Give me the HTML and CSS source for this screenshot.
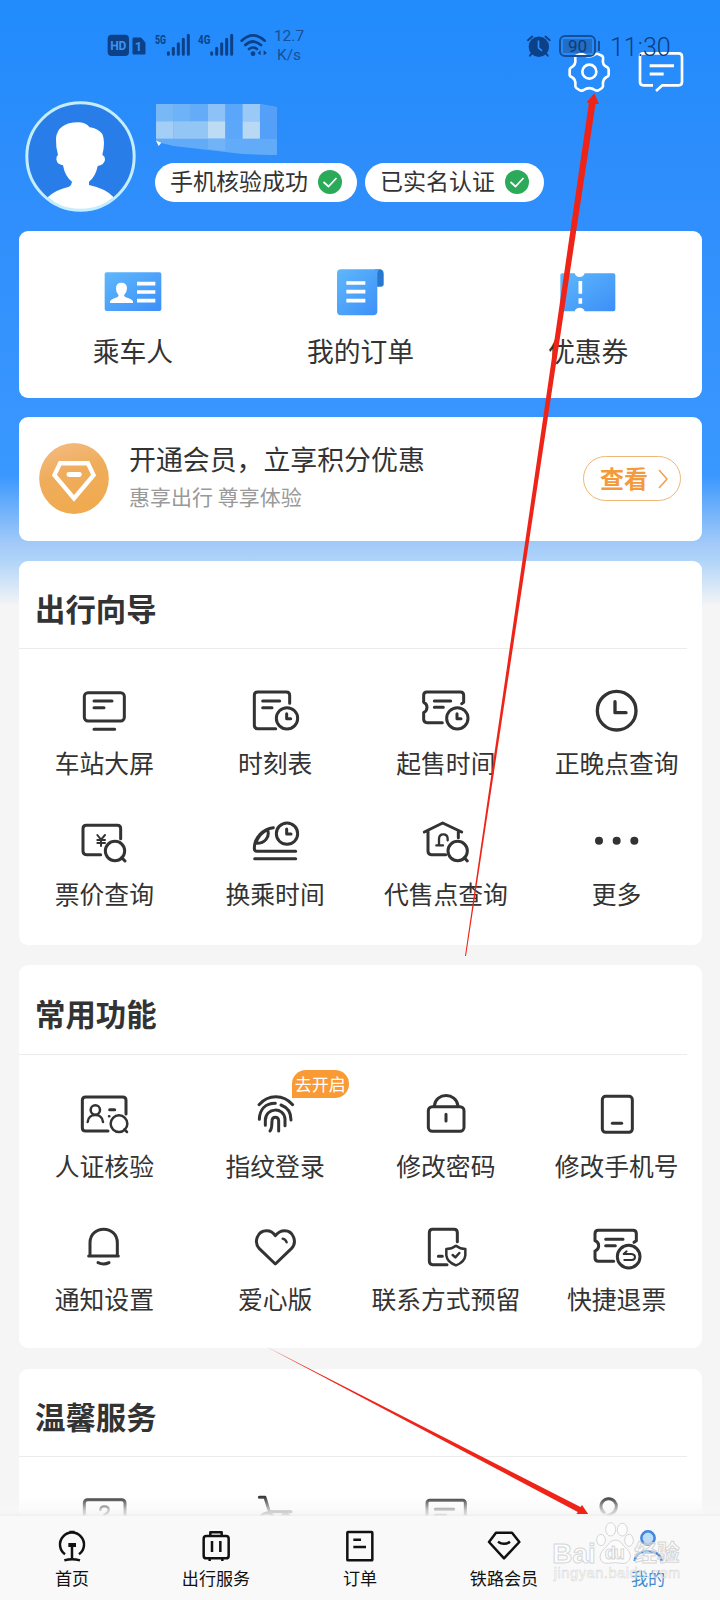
FILE: index.html
```html
<!DOCTYPE html>
<html lang="zh-CN">
<head>
<meta charset="utf-8">
<title>我的</title>
<link rel="stylesheet" href="styles.css">
</head>
<body>
<div class="screen">
  <div class="status">
    <svg class="signals" viewBox="315 90 495 90">
      <rect x="323" y="104" width="64" height="64" rx="12" fill="#0c4187"/>
      <text x="355" y="151" class="st-hd" text-anchor="middle" textLength="48">HD</text>
      <path d="M399 114h24l12 14v34h-36z" fill="#0c4187" stroke="#0c4187" stroke-width="3" stroke-linejoin="round"/>
      <text x="415" y="153" class="st-sim" text-anchor="middle">1</text>
      <text x="465" y="131" class="st-gen" textLength="33" lengthAdjust="spacingAndGlyphs">5G</text>
      <path d="M505 158v5M520 145v18M535 131v32M550 118v45M565 106v57" class="st-bar"/>
      <text x="594" y="131" class="st-gen" textLength="37" lengthAdjust="spacingAndGlyphs">4G</text>
      <path d="M635 158v5M650 145v18M665 131v32M680 118v45M695 106v57" class="st-bar"/>
      <path d="M725 122Q759 90 794 122M736 135Q759 114 783 135M747 147Q759 138 771 147" fill="none" stroke="#0c4187" stroke-width="8" stroke-linecap="round"/>
      <circle cx="759" cy="161" r="7" fill="#0c4187"/>
      <path d="M773 159l9-8v15zM801 159l-10-8v15z" fill="#0c4187"/>
    </svg>
    <div class="speed"><span>12.7</span><span>K/s</span></div>
    <svg class="alarm" viewBox="495 95 85 80">
      <circle cx="537" cy="139" r="31" fill="#0c4187"/>
      <path d="M504 119l13-11M570 119l-13-11M515 160l-5 6M559 160l5 6" stroke="#0c4187" stroke-width="6" stroke-linecap="round"/>
      <path d="M536 120v22l11 9" stroke="#2d8dfb" stroke-width="5" fill="none"/>
    </svg>
    <div class="battery"><span>90</span></div>
    <span class="clock">11:30</span>
  </div>

  <header class="head">
    <div class="tools">
      <svg class="tool" viewBox="612 142 150 150" fill="none" stroke="#fff" stroke-width="8" stroke-linejoin="round">
        <path d="M658 164Q665 160 670 165Q687 176 704 165Q710 160 717 164L727 169Q731 173 729 180Q726 196 742 203Q746 206 746 210V225Q746 230 740 232Q727 239 729 256Q730 262 726 265L717 271Q711 275 705 271Q688 260 671 271Q664 275 658 271L649 265Q645 262 646 256Q648 239 635 232Q629 230 629 225V210Q629 206 634 203Q648 196 646 180Q644 173 648 169Z"/>
        <circle cx="688" cy="216" r="21"/>
      </svg>
      <svg class="tool" viewBox="829 142 150 150" fill="none" stroke="#fff" stroke-width="8" stroke-linejoin="round">
        <path d="M880 257H851Q841 257 841 247V171Q841 161 851 161H957Q967 161 967 171V247Q967 257 957 257H908L889 274"/>
        <path d="M870 198H943M870 223H912" stroke-width="9"/>
      </svg>
    </div>
    <div class="profile">
      <svg class="avatar" viewBox="76 303 333 333">
        <circle cx="242.500" cy="469.500" r="160" fill="#297de8"/>
        <path d="M144 592Q165 570 208 560Q216 556 217 545Q196 530 190 496Q172 494 170 478Q170 468 175 465Q168 440 169 415Q174 368 235 367Q258 367 270 382Q295 385 308 402Q318 425 308 465Q316 468 316 480Q312 496 294 498Q288 530 268 545V555Q320 566 342 592Q298 632 242 630Q185 630 144 592Z" fill="#fff"/>
        <circle cx="242.500" cy="469.500" r="161" fill="none" stroke="#c4eeff" stroke-width="9"/>
      </svg>
      <div class="who">
        <svg class="mosaic" viewBox="468 312 363 154">
          <path d="M468 312H780L831 321V466L728 462L624 450L520 438L468 425Z" fill="#62abf8"/>
          <path d="M468 312h52v52h-52z" fill="#79b8f7"/><path d="M520 312h52v52h-52z" fill="#6eb2f8"/><path d="M572 312h52v52h-52z" fill="#64acf8"/>
          <path d="M624 312h52v52h-52z" fill="#8cc2f7"/><path d="M676 312h52v52h-52z" fill="#5aa6fa"/><path d="M728 312h52v52h-52z" fill="#98c9f7"/>
          <path d="M468 364h52v52h-52z" fill="#a3cef5"/><path d="M520 364h104v52H520z" fill="#93c5f5"/>
          <path d="M624 364h52v52h-52z" fill="#bddcf4"/><path d="M676 364h52v52h-52z" fill="#5ca7fa"/><path d="M728 364h52v52h-52z" fill="#b8d8f4"/>
          <path d="M780 314l51 8v95h-51z" fill="#549ff8"/><path d="M624 416h52v36l-52-5z" fill="#71b3f7"/>
          <path d="M468 422l16 6-8 10z" fill="#fff"/>
        </svg>
        <div class="pills">
          <div class="pill"><span>手机核验成功</span><svg viewBox="0 0 24 24"><circle cx="12" cy="12" r="12" fill="#2baa5a"/><path d="M5.500 12l5 4.500 8-8.500" fill="none" stroke="#fff" stroke-width="1.700"/></svg></div>
          <div class="pill"><span>已实名认证</span><svg viewBox="0 0 24 24"><circle cx="12" cy="12" r="12" fill="#2baa5a"/><path d="M5.500 12l5 4.500 8-8.500" fill="none" stroke="#fff" stroke-width="1.700"/></svg></div>
        </div>
      </div>
    </div>
  </header>

  <main class="cards">
    <svg class="defs" width="0" height="0"><defs>
      <linearGradient id="blue" x1="0" y1="0" x2="1" y2="1"><stop offset="0" stop-color="#5fb7fb"/><stop offset="1" stop-color="#3c8ff8"/></linearGradient>
      <linearGradient id="gold" x1="0" y1="0" x2=".3" y2="1"><stop offset="0" stop-color="#f4bd85"/><stop offset=".5" stop-color="#efad5c"/><stop offset="1" stop-color="#f0aa50"/></linearGradient>
    </defs></svg>
    <section class="card quick">
      <a class="q"><svg viewBox="293 131 210 168"><rect x="313" y="156" width="170" height="116" rx="6" fill="url(#blue)"/><path d="M329 248v-5Q334 235 352 230L355 225Q346 215 347 204Q347 187 363 187Q380 187 380 204Q380 216 371 225L374 230Q394 235 398 243V248Z" fill="#fff"/><path d="M410 190H465M410 215H465M410 241H465" stroke="#fff" stroke-width="11"/></svg><span>乘车人</span></a>
      <a class="q"><svg viewBox="976 131 210 168"><path d="M1126 147H1142Q1152 149 1152 160V192Q1152 199 1145 199H1130Z" fill="#2878d0"/><path d="M1024 147H1140Q1133 150 1133 163V273Q1133 285 1120 285H1024Q1012 285 1012 273V159Q1012 147 1024 147Z" fill="url(#blue)"/><path d="M1040 188H1097M1040 214H1097M1040 241H1097" stroke="#fff" stroke-width="11"/></svg><span>我的订单</span></a>
      <a class="q"><svg viewBox="580 131 210 168"><path d="M607 159H645Q648 170 660 170Q672 170 675 159H761Q767 159 767 165V267Q767 273 761 273H675Q672 262 660 262Q648 262 645 273H607Q602 273 602 267V165Q602 159 607 159Z" fill="url(#blue)"/><path d="M662 182V220M662 234V250" stroke="#fff" stroke-width="11"/></svg><span>优惠券</span></a>
    </section>

    <section class="card member">
      <svg class="badge" viewBox="117 671 210 214"><ellipse cx="222" cy="778" rx="105" ry="107" fill="url(#gold)"/><path d="M180 732H264L281 768L222 838L163 768Z" fill="none" stroke="#fff" stroke-width="13"/><path d="M207 766H238" stroke="#fff" stroke-width="15" stroke-linecap="round"/></svg>
      <div class="pitch"><span class="pitch-t">开通会员，立享积分优惠</span><span class="pitch-s">惠享出行 尊享体验</span></div>
      <a class="see"><span>查看</span><svg viewBox="0 0 10 20"><path d="M1 1l8 9-8 9" fill="none" stroke="#f0a04b" stroke-width="1.500"/></svg></a>
    </section>

    <section class="card group guide">
      <h2>出行向导</h2>
      <div class="grid">
        <a class="it"><svg viewBox="238 407 150 150"><rect x="254" y="427" width="120" height="85" rx="11"/><path d="M283 452H337M283 472H313M283 537H345"/></svg><span>车站大屏</span></a>
        <a class="it"><svg viewBox="750 407 150 150"><path d="M869 459V435Q869 425 859 425H773Q763 425 763 435V525Q763 535 773 535H827M788 452H839M788 472H816M860 490V505H872"/><circle cx="861" cy="504" r="32"/></svg><span>时刻表</span></a>
        <a class="it"><svg viewBox="182 407 150 150"><path d="M246 517H200Q190 517 190 507V487Q200 482 200 471Q200 460 190 456V435Q190 425 200 425H300Q310 425 310 435V456L304 460M222 452H271M222 471H249M290 490V505H302"/><circle cx="291" cy="504" r="32"/></svg><span>起售时间</span></a>
        <a class="it"><svg viewBox="695 407 150 150"><g stroke-width="10"><circle cx="769" cy="481" r="58"/><path d="M764 454V487H797"/></g></svg><span>正晚点查询</span></a>
        <a class="it"><svg viewBox="238 800 150 150"><path d="M363 865V835Q363 825 353 825H260Q250 825 250 835V903Q250 913 260 913H303M366 922L376 932"/><path d="M293 854L304 868L316 854M304 868V887M293 869H316M293 878H316" stroke-width="6"/><circle cx="346" cy="902" r="29"/></svg><span>票价查询</span></a>
        <a class="it"><svg viewBox="750 800 150 150"><path d="M820 832C790 836 763 860 763 894Q763 903 771 903H887M764 925H887M803 838C810 860 795 880 768 879C773 860 787 845 803 838"/><path d="M860 836V851H873"/><circle cx="861" cy="850" r="32"/></svg><span>换乘时间</span></a>
        <a class="it"><svg viewBox="182 800 150 150"><path d="M192 845L247 818L304 845M203 843V903Q203 913 213 913H256M294 845V862M312 922L321 932"/><path d="M236 884V866Q236 852 249 852Q262 852 262 866V870M228 885H248" stroke-width="7"/><circle cx="292" cy="902" r="29"/></svg><span>代售点查询</span></a>
        <a class="it"><svg viewBox="695 800 150 150"><path class="solid" d="M704 871a12 12 0 1 0 24 0a12 12 0 1 0-24 0M757 871a12 12 0 1 0 24 0a12 12 0 1 0-24 0M810 871a12 12 0 1 0 24 0a12 12 0 1 0-24 0"/></svg><span>更多</span></a>
      </div>
    </section>

    <section class="card group common">
      <h2>常用功能</h2>
      <div class="grid">
        <a class="it"><svg viewBox="238 415 150 150"><path d="M379 490V449Q379 439 369 439H258Q248 439 248 449V531Q248 541 258 541H325M330 477H345"/><g stroke-width="7.500"><circle cx="287" cy="478" r="14"/><path d="M264 514C266 486 308 486 310 514M328 497h1M374 536L382 544"/><circle cx="358" cy="519" r="25"/></g></svg><span>人证核验</span></a>
        <a class="it"><svg viewBox="750 415 150 150"><path d="M777 462C805 430 850 430 878 462M778 506C779 478 795 458 826 458M843 463C862 470 873 486 873 508M796 524V508C797 470 852 468 855 505V525M810 541C817 533 815 520 816 510C817 496 835 496 836 510V541"/></svg><span>指纹登录</span><em class="tag">去开启</em></a>
        <a class="it"><svg viewBox="182 415 150 150"><rect x="204" y="468" width="107" height="74" rx="12"/><path d="M222 466C226 424 288 424 293 466M257 491V511"/></svg><span>修改密码</span></a>
        <a class="it"><svg viewBox="695 415 150 150"><rect x="726" y="437" width="90" height="108" rx="10"/><path d="M756 518H784"/></svg><span>修改手机号</span></a>
        <a class="it"><svg viewBox="238 812 150 150"><path d="M271 913V875C271 820 353 820 353 875V913M267 914H356M295 934Q312 942 328 934"/></svg><span>通知设置</span></a>
        <a class="it"><svg viewBox="750 812 150 150"><path d="M826 938L778 892C760 872 772 838 800 838C813 838 821 845 826 853C832 845 840 838 854 838C880 838 893 872 874 892Z"/><path d="M848 862Q857 864 860 873" stroke-width="7"/></svg><span>爱心版</span></a>
        <a class="it"><svg viewBox="182 812 150 150"><path d="M291 871V844Q291 834 281 834H217Q207 834 207 844V930Q207 940 217 940H260M234 915H246"/><g stroke-width="7.500"><path d="M287 883Q300 893 315 893V912Q313 932 287 942Q260 932 258 912V893Q274 893 287 883Z"/><path d="M277 911L285 918L297 905"/></g></svg><span>联系方式预留</span></a>
        <a class="it"><svg viewBox="695 812 150 150"><path d="M760 930H714Q704 930 704 920V899Q715 894 715 883Q715 872 704 868V847Q704 837 714 837H818Q828 837 828 847V868L821 873M736 864H788M736 883H765"/><circle cx="805" cy="916" r="34"/><path d="M799 900L790 908H814Q824 909 824 917Q824 926 814 926H792" stroke-width="6"/></svg><span>快捷退票</span></a>
      </div>
    </section>

    <section class="card group warm">
      <h2>温馨服务</h2>
      <div class="grid">
        <a class="it"><svg viewBox="238 452 150 150"><rect x="254" y="481" width="122" height="90" rx="10"/><path d="M302 512Q302 501 314 501Q327 501 327 511Q327 520 314 526V534" stroke-width="7"/></svg></a>
        <a class="it"><svg viewBox="750 452 150 150"><path d="M778 474H795L808 517H873M784 530Q800 512 820 530M846 530Q856 518 868 530"/></svg></a>
        <a class="it"><svg viewBox="182 452 150 150"><rect x="200" y="483" width="115" height="88" rx="8"/><path d="M225 510H280M225 528H256"/></svg></a>
        <a class="it"><svg viewBox="695 452 150 150"><path d="M732 520A23 23 0 1 1 758 520Q750 526 740 530"/></svg></a>
      </div>
    </section>
  </main>

  <nav class="tabs">
    <a class="tab"><svg viewBox="155 557 120 120"><path d="M194 642A36 36 0 1 1 236 642M207 575H223M192 660Q215 653 239 660"/><path d="M215 612V655" /><path d="M204 614H227" stroke-width="12"/></svg><span>首页</span></a>
    <a class="tab"><svg viewBox="587 557 120 120"><rect x="610" y="587" width="75" height="67" rx="8"/><path d="M630 585V576H664V585M635 602V635M660 602V635M628 656V662M666 656V662"/></svg><span>出行服务</span></a>
    <a class="tab"><svg viewBox="-60 557 120 120"><rect x="-38" y="575" width="75" height="85" rx="2"/><path d="M-20 598H3M-20 620H18"/></svg><span>订单</span></a>
    <a class="tab"><svg viewBox="371 557 120 120"><path d="M407 577H455L477 605L431 654L386 605Z"/><path d="M413 604Q431 617 449 604"/></svg><span>铁路会员</span></a>
    <a class="tab on"><svg viewBox="803 557 120 120"><circle cx="863" cy="593" r="20" fill="#bcdcf9"/><path d="M823 662C827 622 899 622 904 662"/></svg><span>我的</span></a>
  </nav>

  <svg class="watermark" viewBox="575 540 390 190">
    <g class="wm">
      <text x="576" y="668" font-size="84" textLength="130">Bai</text>
      <ellipse cx="722" cy="600" rx="13" ry="17"/><ellipse cx="751" cy="568" rx="15" ry="20"/><ellipse cx="786" cy="569" rx="15" ry="19"/><ellipse cx="806" cy="601" rx="13" ry="18"/>
      <path d="M763 600Q780 600 790 618Q812 634 810 652Q804 674 782 670Q763 666 745 670Q722 672 719 652Q720 634 740 618Q750 600 763 600Z"/>
      <text x="733" y="658" font-size="54" textLength="60">du</text>
      <text x="822" y="664" font-size="68" textLength="136" class="cjk">经验</text>
      <text x="580" y="714" font-size="44" textLength="380" class="thin">jingyan.baidu.com</text>
    </g>
  </svg>
  <svg class="arrows" viewBox="0 0 720 1600" fill="#ef2418">
    <path d="M465 956L588.900 103L586.500 102.500L594.300 93.300L599 104L595.500 104L466 956Z"/>
    <path d="M265 1346L580.500 1507L582 1505L588.200 1514L576.500 1514L577.800 1512Z"/>
  </svg>
</div>
</body>
</html>
```

FILE: styles.css
```css
* { box-sizing: border-box; }

body {
  margin: 0;
  font-family: "Noto Sans CJK SC", "Noto Sans", sans-serif;
  color: #333;
}

.screen {
  position: relative;
  width: 720px;
  height: 1600px;
  overflow: hidden;
  display: flex;
  flex-direction: column;
  background: #f5f5f5 linear-gradient(#218bfd 0, #2d8dfb 160px, #3895ff 400px, #3997ff 475px, #6db0fb 508px, #a4cbf8 545px, #acd2f9 558px, #f5f5f5 606px);
}

/* Status bar, drawn above the page header */
.status {
  position: absolute;
  z-index: 2;
  left: 105px;
  top: 26px;
  width: 580px;
  height: 40px;
  display: flex;
  align-items: center;
  color: #184f96;
  font-family: Roboto, sans-serif;
}
.signals { width: 165px; height: 30px; margin-top: -2px; }
.st-hd { font: 700 36px Roboto, sans-serif; fill: #3d93f5; }
.st-sim { font: 700 38px Roboto, sans-serif; fill: #3d93f5; }
.st-gen { font: 700 38px Roboto, sans-serif; fill: #0c4187; }
.st-bar { fill: none; stroke: #0c4187; stroke-width: 9; stroke-linecap: round; }
.speed {
  display: flex;
  flex-direction: column;
  width: 40px;
  margin-left: -1px;
  text-align: center;
  font-size: 15.500px;
  line-height: 19px;
}
.alarm { width: 28px; height: 27px; margin-left: 216px; margin-top: -2px; }
.battery {
  position: relative;
  width: 37px;
  height: 22px;
  margin-left: 6px;
  margin-top: -1px;
  padding: 2px;
  border: 2px solid #164f97;
  border-radius: 6px;
}
.battery::after {
  content: "";
  position: absolute;
  right: -6px;
  top: 4px;
  width: 2.500px;
  height: 10px;
  background: #164f97;
}
.battery span {
  display: block;
  height: 14px;
  font-size: 17px;
  line-height: 15px;
  text-align: center;
  background: #236dc4;
  color: #0c3c7d;
}
.clock { margin-left: 14px; padding-top: 2px; font-size: 25px; font-weight: 300; color: #0d3d7e; }

/* Header */
.head { flex: none; height: 231px; }
.tools {
  display: flex;
  justify-content: flex-end;
  gap: 22.300px;
  height: 101px;
  padding: 47.300px 33.700px 0 0;
}
.tool { width: 50px; height: 50px; }
.profile { display: flex; padding-left: 25px; gap: 19px; }
.avatar { width: 111px; height: 111px; }
.who { padding-top: 3px; }
.mosaic { display: block; width: 121px; height: 51.300px; margin-left: 1px; }
.pills { display: flex; gap: 8px; margin-top: 7.700px; }
.pill {
  display: flex;
  align-items: center;
  height: 39.300px;
  padding: 0 15px 0 15px;
  gap: 10px;
  border-radius: 20px;
  background: #fff;
  font-size: 23px;
  line-height: 36px;
}
.pill span { margin-top: -6px; }
.pill svg { width: 24px; height: 24px; margin-top: -1px; }

/* Cards */
.cards { flex: none; display: flex; flex-direction: column; padding: 0 18px 0 19px; }
.defs { position: absolute; }
.card { flex: none; background: #fff; border-radius: 9px; }

.quick {
  display: grid;
  grid-template-columns: repeat(3, 1fr);
  height: 167px;
  padding-top: 32.700px;
}
.q { display: flex; flex-direction: column; align-items: center; gap: 13px; }
.q svg { width: 70px; height: 56px; }
.q span { font-size: 26.800px; line-height: 36px; }

.member {
  display: flex;
  align-items: center;
  height: 124px;
  margin-top: 18.500px;
  padding: 0 21px 0 20px;
}
.badge { width: 70px; height: 71px; }
.pitch { display: flex; flex-direction: column; flex: 1; padding: 0 0 4px 20px; }
.pitch-t { font-size: 26.900px; line-height: 38px; }
.pitch-s { font-size: 21px; line-height: 36px; color: #999; }
.see {
  display: flex;
  align-items: center;
  gap: 10px;
  width: 98px;
  height: 45px;
  padding-left: 16px;
  border: 1.500px solid #efb775;
  border-radius: 23px;
  color: #f59a3c;
  font-size: 24px;
  font-weight: 700;
}
.see span { margin-top: -3px; }
.see svg { width: 10px; height: 20px; }

.group { height: 384px; }
.guide { margin-top: 20.500px; }
.common { margin-top: 19.500px; height: 383px; }
.warm { margin-top: 21px; }
.group h2 {
  height: 88px;
  margin: 0 15px 0 0;
  padding: 25px 0 0 16px;
  border-bottom: 1.500px solid #ececec;
  font-size: 30.400px;
  line-height: 44px;
  font-weight: 700;
}
.common h2 { height: 90px; padding-top: 26.500px; }
.warm h2 { height: 88.500px; padding-top: 25.500px; }
.grid {
  display: grid;
  grid-template-columns: repeat(4, 1fr);
  row-gap: 38px;
  padding-top: 36.500px;
}
.common .grid { padding-top: 34.500px; row-gap: 39.500px; }
.warm .grid { padding-top: 33px; }
.it {
  position: relative;
  display: flex;
  flex-direction: column;
  align-items: center;
  height: 93px;
}
.it svg {
  width: 50px;
  height: 50px;
  margin-bottom: 11px;
  fill: none;
  stroke: #333;
  stroke-width: 9px;
  stroke-linecap: round;
  stroke-linejoin: round;
}
.it .solid { fill: #333; stroke: none; }
.it span { font-size: 24.800px; line-height: 30px; white-space: nowrap; }
.tag {
  position: absolute;
  left: 102px;
  top: -19px;
  width: 57px;
  height: 28px;
  border-radius: 14px 14px 14px 0;
  background: #fa9a35;
  color: #fff;
  font-size: 17px;
  font-style: normal;
  line-height: 28px;
  text-align: center;
}

/* Bottom tabs */
.tabs {
  position: absolute;
  left: 0;
  right: 0;
  bottom: 0;
  height: 84px;
  display: grid;
  grid-template-columns: repeat(5, 1fr);
  padding-top: 9.700px;
  background: #f9f9f9;
  color: #111;
}
.tabs::before {
  content: "";
  position: absolute;
  left: 0;
  right: 0;
  top: -20px;
  height: 20px;
  background: linear-gradient(rgba(250, 250, 250, 0), rgba(248, 248, 248, .75) 70%, rgba(244, 244, 244, .85) 90%, #eee);
}
.tab { display: flex; flex-direction: column; align-items: center; }
.tab svg { width: 40px; height: 40px; fill: none; stroke: #111; stroke-width: 7.500; stroke-linejoin: round; }
.tab span { font-size: 17.100px; line-height: 24px; }
.tab.on { color: #3e8bd5; }
.tab.on svg { stroke: #3f86dc; }

.watermark { position: absolute; left: 551.700px; top: 1520px; width: 130px; height: 63.300px; }
.wm { fill: rgba(255, 255, 255, .5); stroke: rgba(205, 205, 205, .8); stroke-width: 3; font-family: "Liberation Sans", sans-serif; font-weight: 700; }
.wm .cjk { font-family: "Noto Sans CJK SC", sans-serif; }
.wm .thin { font-weight: 400; stroke-width: 1.500; }

.arrows { position: absolute; z-index: 3; left: 0; top: 0; width: 720px; height: 1600px; pointer-events: none; }
```
